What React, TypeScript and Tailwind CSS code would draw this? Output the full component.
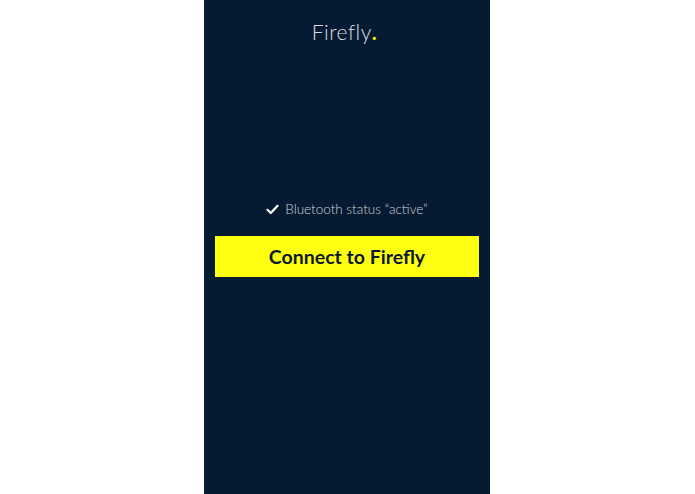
export default function App() {
  return (
    <div className="flex h-[494px] w-full bg-white" style={{ fontFamily: "Lato, 'Open Sans', sans-serif" }}>
      <div className="ml-[204px] flex h-full w-[286px] flex-col items-center bg-[#061b32]">
        <h1 className="mt-[18px] mr-[5px] text-[21px] font-light leading-[28px] tracking-[0.5px] text-[#d9dee4]">
          Firefly<span className="font-bold text-[#f5f500]">.</span>
        </h1>
        <div className="mt-[153px] flex items-center gap-[6px] text-[13.5px] font-light text-[#ced4db]">
          <svg width="13" height="11" viewBox="0 0 13 11" fill="none">
            <path d="M1.5 5.8 L4.8 9 L11.5 1.8" stroke="#ffffff" strokeWidth="2.2" strokeLinecap="round" strokeLinejoin="round" />
          </svg>
          <span>Bluetooth status “active”</span>
        </div>
        <button className="mt-[17px] flex h-[41px] w-[264px] items-center justify-center bg-[#ffff10] text-[19.5px] font-bold text-[#0b1a2a]">
          Connect to Firefly
        </button>
      </div>
    </div>
  );
}
